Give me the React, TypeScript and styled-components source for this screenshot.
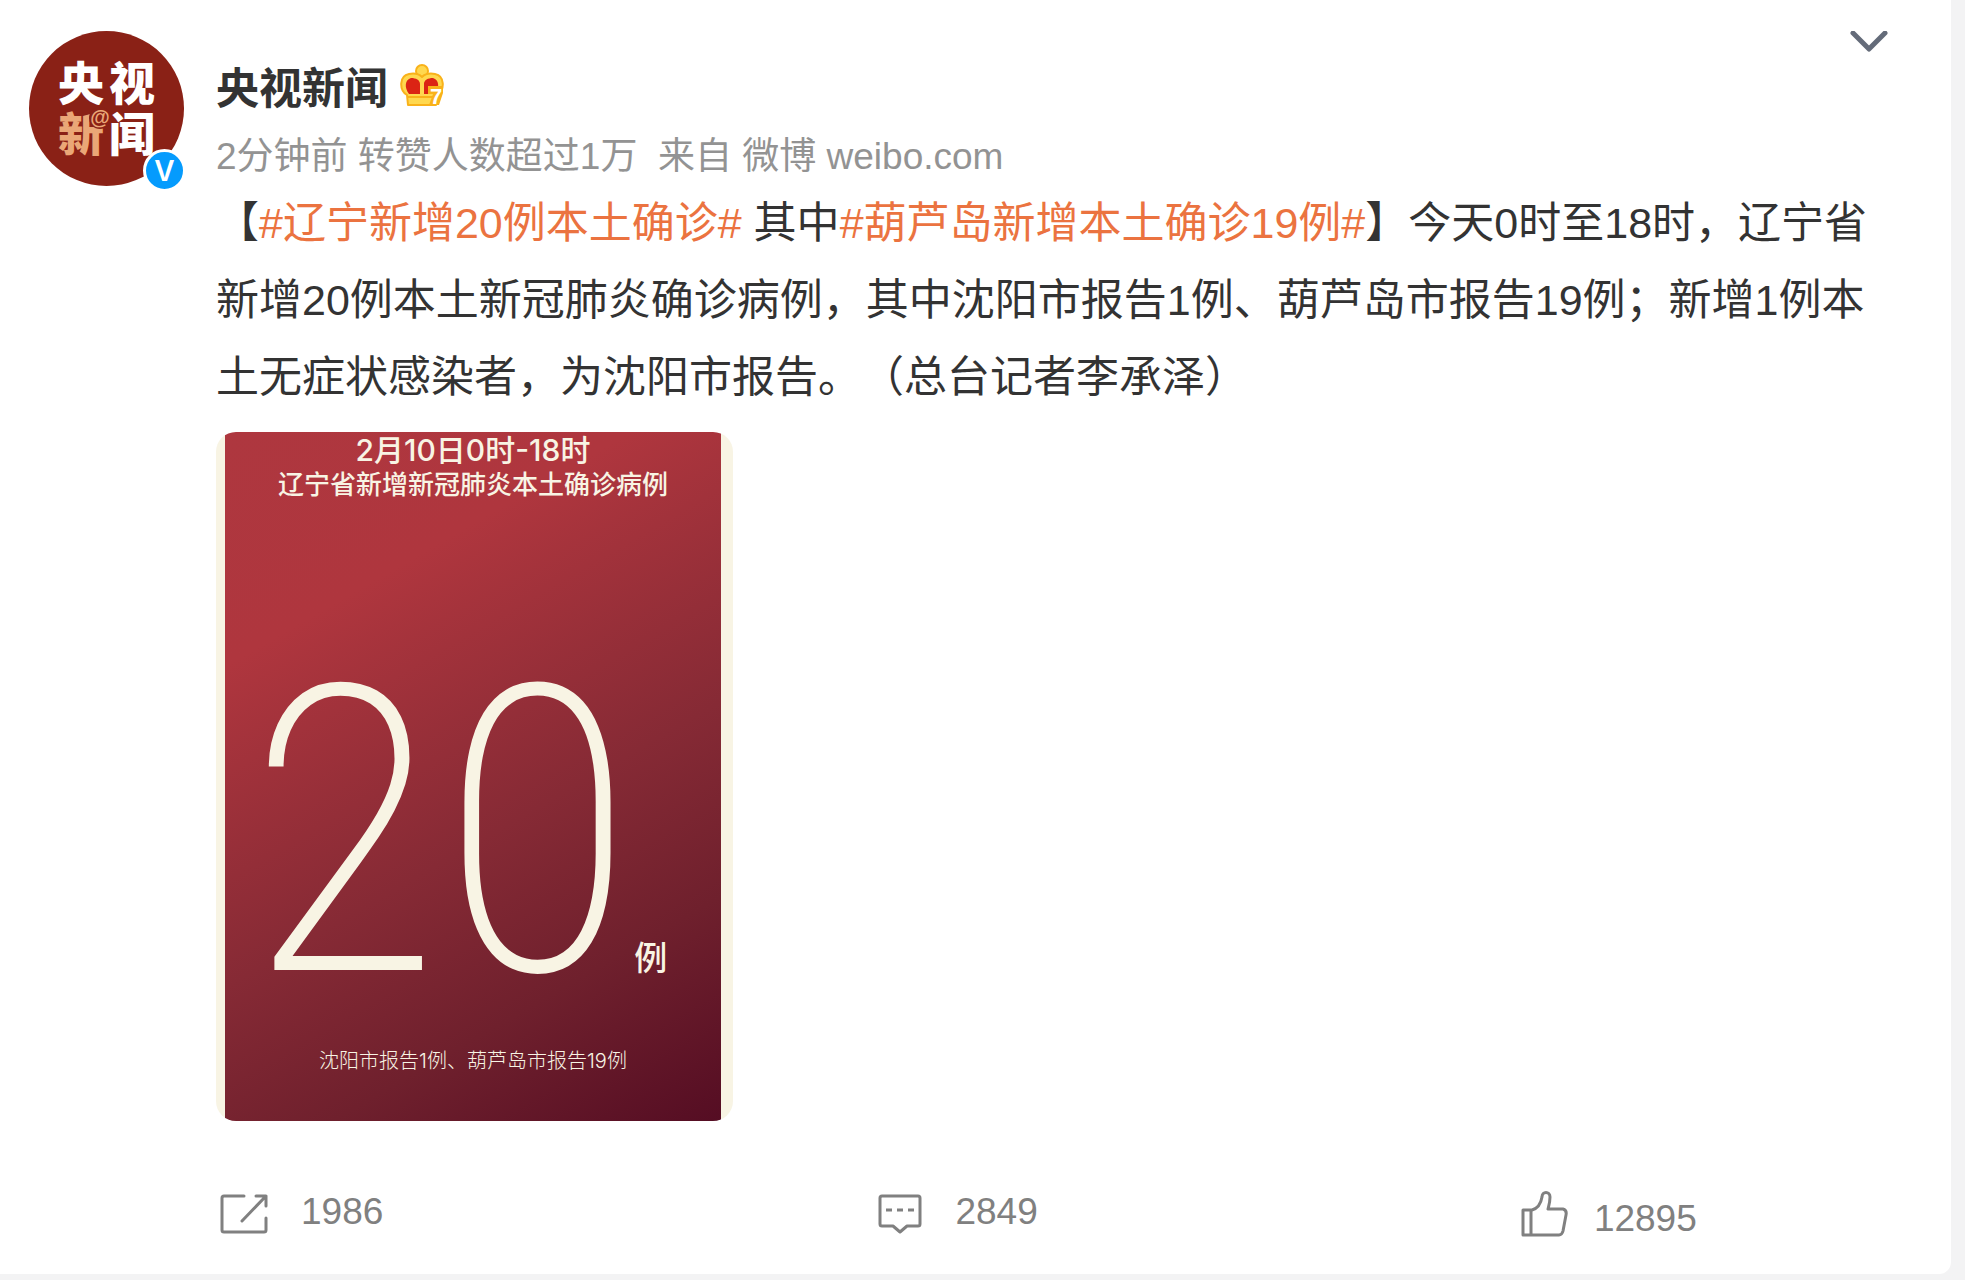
import React from "react";
import styled, { createGlobalStyle } from "styled-components";

const GlobalStyle = createGlobalStyle`
  * { box-sizing: border-box; }
  body {
    margin: 0;
    background: #f3f3f4;
    color: #333;
    font-family: "Liberation Sans", "Noto Sans CJK SC", sans-serif;
    text-spacing-trim: space-all;
  }
`;

const Card = styled.article`
  display: flex;
  align-items: flex-start;
  margin: 0 14px 5px 0;
  padding: 31px 60px 37px 29px;
  background: #fff;
  border-radius: 0 0 12px 0;
`;

const AvatarLink = styled.a`
  position: relative;
  flex: none;
  display: grid;
  grid-template-columns: 51px 51px;
  grid-auto-rows: 51px;
  place-content: center;
  place-items: center;
  width: 155px;
  height: 155px;
  margin-right: 32px;
  padding-bottom: 6px;
  border-radius: 50%;
  background: #8a2116;
  color: #fff;
  font-family: "Noto Sans CJK SC", sans-serif;
  font-size: 46px;
  font-weight: 900;
  line-height: 51px;
  text-decoration: none;
`;

const AvatarGlyph = styled.span<{ $accent?: boolean }>`
  color: ${(p) => (p.$accent ? "#eaa777" : "#fff")};
`;

const AtMark = styled.span`
  position: absolute;
  left: 60px;
  top: 76px;
  width: 22px;
  height: 22px;
  border-radius: 50%;
  background: #8a2116;
  color: #eaa777;
  font-family: "Liberation Sans", sans-serif;
  font-size: 20px;
  font-weight: 700;
  line-height: 20px;
  text-align: center;
`;

const VerifiedBadge = styled.span`
  position: absolute;
  right: -2px;
  bottom: -6px;
  width: 43px;
  height: 43px;
  border: 3px solid #fff;
  border-radius: 50%;
  background: #059bfd;
  color: #fff;
  font-family: Inter, sans-serif;
  font-size: 28px;
  font-weight: 600;
  line-height: 38px;
  text-align: center;
`;

const Main = styled.div`
  flex: 1;
  min-width: 0;
`;

const Header = styled.header`
  display: flex;
  justify-content: space-between;
  align-items: flex-start;
`;

const NameRow = styled.div`
  display: flex;
  align-items: flex-start;
  gap: 12px;
  margin-top: 28px;
`;

const Name = styled.a`
  color: #333;
  font-size: 43px;
  font-weight: 700;
  line-height: 60px;
  text-decoration: none;
`;

const MenuButton = styled.button`
  display: flex;
  width: 44px;
  height: 28px;
  padding: 0;
  border: 0;
  background: none;
  color: #646b79;
`;

const Meta = styled.p`
  margin: 12px 0 0;
  color: #939393;
  font-size: 37px;
  line-height: 52px;
  white-space: pre-wrap;
`;

const MetaLink = styled.a`
  color: inherit;
  text-decoration: none;
`;

const Body = styled.p`
  margin: 2px 0 0;
  font-size: 43px;
  line-height: 77px;
`;

const Topic = styled.a`
  color: #eb7340;
  text-decoration: none;
`;

const Poster = styled.figure`
  display: flex;
  flex-direction: column;
  align-items: center;
  width: 517px;
  height: 689px;
  margin: 16px 0 0;
  padding: 0 12px 0 9px;
  border-radius: 20px;
  background:
    linear-gradient(150deg, #ae373f 0%, #af363e 24%, #862a35 57%, #6f202d 77%, #550d23 100%) 9px 0 / calc(100% - 21px) 100% no-repeat,
    #f8f4e4;
  color: #f8f4e4;
  font-family: "Noto Sans CJK SC", sans-serif;
`;

const PosterDate = styled.div`
  font-family: Inter, "Noto Sans CJK SC", sans-serif;
  font-size: 30px;
  font-weight: 500;
  line-height: 36px;
`;

const PosterTitle = styled.div`
  font-size: 26px;
  font-weight: 500;
  line-height: 30px;
`;

const PosterFigure = styled.div`
  display: flex;
  flex: 1;
  align-items: baseline;
  padding: 136px 32px 0 0;
`;

const PosterNumber = styled.strong`
  font-family: "Roboto Condensed", Roboto, sans-serif;
  font-size: 400px;
  font-weight: 200;
  line-height: 400px;
`;

const PosterUnit = styled.span`
  font-size: 33px;
  font-weight: 500;
  line-height: 44px;
`;

const PosterNote = styled.figcaption`
  margin-bottom: 46px;
  font-family: Inter, "Noto Sans CJK SC", sans-serif;
  font-size: 20px;
  font-weight: 300;
  line-height: 28px;
`;

const Actions = styled.footer`
  display: grid;
  grid-template-columns: 660fr 644fr 371fr;
  align-items: center;
  margin-top: 70px;
  padding-left: 4px;
`;

const Action = styled.button<{ $align: "start" | "end" }>`
  display: flex;
  justify-self: start;
  align-items: flex-${(p) => p.$align};
  gap: ${(p) => (p.$align === "end" ? 26 : 33)}px;
  padding: 0;
  border: 0;
  background: none;
  color: #808080;
  font-family: inherit;
  font-size: 37px;
  line-height: 36px;
`;

const Crown = () => (
  <svg width="48" height="52" viewBox="0 -3 48 52" role="img" aria-label="7级会员">
    <circle cx="22" cy="9" r="6" fill="#ffd84f" stroke="#f9b21a" strokeWidth="2" />
    <path d="M8 43 L7 33 C-1 28 -1 14 9 12 C14 11 19 12 22 15 C25 12 30 11 35 12 C45 14 45 28 37 33 L36 43 Z" fill="#ffd84f" stroke="#f9b21a" strokeWidth="2" strokeLinejoin="round" />
    <path d="M20 32 H9 C4 25 5 18 11 16 C16 16 20 18 20 22Z M24 32 H35 C40 25 39 18 33 16 C28 16 24 18 24 22Z" fill="#db2414" />
    <path d="M8 35 H36" stroke="#f9b21a" strokeWidth="2" />
    <path d="M28 24 H43 V31 L39 43 H29 L33 32 H28Z" fill="#f9b21a" />
    <text x="30" y="42" fill="#fff" fontFamily="Liberation Sans" fontWeight="700" fontSize="22">7</text>
  </svg>
);

const Chevron = () => (
  <svg width="44" height="28" viewBox="0 0 44 28" fill="none" stroke="currentColor" strokeWidth="5" strokeLinecap="round" strokeLinejoin="round">
    <path d="M6 2 L22 18 L38 2" />
  </svg>
);

const ShareIcon = () => (
  <svg width="48" height="40" viewBox="0 0 48 40" fill="none" stroke="currentColor" strokeWidth="3" strokeLinecap="round" strokeLinejoin="round">
    <path d="M24 2 H4 Q2 2 2 4 V36 Q2 38 4 38 H44 Q46 38 46 36 V24" />
    <path d="M36 2 H46 V12 M46 2 L22 27" />
  </svg>
);

const CommentIcon = () => (
  <svg width="44" height="40" viewBox="0 0 44 40" fill="none" stroke="currentColor" strokeWidth="3" strokeLinejoin="round">
    <path d="M4 2 H40 Q42 2 42 4 V30 Q42 32 40 32 H29 L22 38 L15 32 H4 Q2 32 2 30 V4 Q2 2 4 2Z" />
    <path d="M8 16 H14 M19 16 H25 M30 16 H36" />
  </svg>
);

const LikeIcon = () => (
  <svg width="47" height="46" viewBox="0 0 47 46" fill="none" stroke="currentColor" strokeWidth="3" strokeLinejoin="round">
    <path d="M2 19 H11 C18 17 20 12 21 6 C21 0 29 0 29 6 C29 11 28 14 27 18 H42 Q46 19 45 24 L42 40 Q41 44 38 44 H2Z M10 19 V44" />
  </svg>
);

export default function App() {
  return (
    <>
      <GlobalStyle />
      <Card>
        <AvatarLink href="#profile" aria-label="央视新闻">
          <AvatarGlyph>央</AvatarGlyph>
          <AvatarGlyph>视</AvatarGlyph>
          <AvatarGlyph $accent>新</AvatarGlyph>
          <AvatarGlyph>闻</AvatarGlyph>
          <AtMark>@</AtMark>
          <VerifiedBadge>V</VerifiedBadge>
        </AvatarLink>
        <Main>
          <Header>
            <NameRow>
              <Name href="#profile">央视新闻</Name>
              <Crown />
            </NameRow>
            <MenuButton aria-label="更多">
              <Chevron />
            </MenuButton>
          </Header>
          <Meta>
            2分钟前 转赞人数超过1万{"  "}来自 <MetaLink href="#source">微博 weibo.com</MetaLink>
          </Meta>
          <Body>
            【<Topic href="#topic-liaoning">#辽宁新增20例本土确诊#</Topic> 其中
            <Topic href="#topic-huludao">#葫芦岛新增本土确诊19例#</Topic>
            】今天0时至18时，辽宁省新增20例本土新冠肺炎确诊病例，其中沈阳市报告1例、葫芦岛市报告19例；新增1例本土无症状感染者，为沈阳市报告。（总台记者李承泽）
          </Body>
          <Poster>
            <PosterDate>2月10日0时-18时</PosterDate>
            <PosterTitle>辽宁省新增新冠肺炎本土确诊病例</PosterTitle>
            <PosterFigure>
              <PosterNumber>20</PosterNumber>
              <PosterUnit>例</PosterUnit>
            </PosterFigure>
            <PosterNote>沈阳市报告1例、葫芦岛市报告19例</PosterNote>
          </Poster>
          <Actions>
            <Action $align="start">
              <ShareIcon />
              1986
            </Action>
            <Action $align="start">
              <CommentIcon />
              2849
            </Action>
            <Action $align="end">
              <LikeIcon />
              12895
            </Action>
          </Actions>
        </Main>
      </Card>
    </>
  );
}
